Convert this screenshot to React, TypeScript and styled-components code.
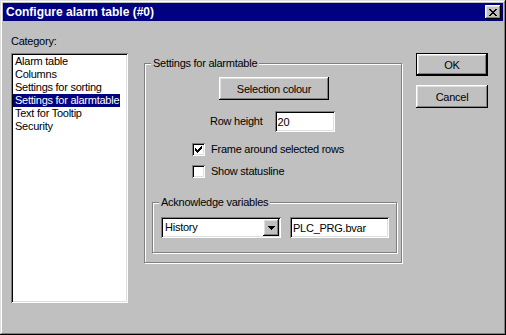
import styled, { createGlobalStyle, css } from 'styled-components';

const GlobalStyle = createGlobalStyle`
 html, body {
  margin: 0;
  padding: 0;
  background: #c0c0c0;
 }
 body {
  font-family: "Liberation Sans", Arial, sans-serif;
  font-size: 11px;
  letter-spacing: -0.25px;
  color: #000;
 }
`;

const raised = css`
 background: #c0c0c0;
 box-shadow: inset -1px -1px #000, inset 1px 1px #fff, inset -2px -2px #808080, inset 2px 2px #dfdfdf;
`;

const sunken = css`
 background: #fff;
 box-shadow: inset 1px 1px #808080, inset -1px -1px #fff, inset 2px 2px #000, inset -2px -2px #dfdfdf;
`;

const Window = styled.div`
 width: 506px;
 height: 335px;
 box-sizing: border-box;
 padding: 3px;
 display: flex;
 flex-direction: column;
 background: #c0c0c0;
 box-shadow: inset -1px -1px #000, inset 1px 1px #dfdfdf, inset -2px -2px #808080, inset 2px 2px #fff;
`;

const TitleBar = styled.div`
 height: 18px;
 display: flex;
 align-items: center;
 justify-content: space-between;
 padding: 0 2px 0 3px;
 background: #000080;
 color: #fff;
 font-weight: bold;
 font-size: 12px;
 letter-spacing: 0;
 line-height: 18px;
`;

const CloseButton = styled.div`
 width: 16px;
 height: 14px;
 display: flex;
 align-items: center;
 justify-content: center;
 ${raised};
`;

const Body = styled.div`
 display: flex;
 align-items: flex-start;
 padding: 14px 0 0 8px;
`;

const LeftColumn = styled.div`
 width: 117px;
 display: flex;
 flex-direction: column;
`;

const Label = styled.div`
 height: 13px;
 line-height: 13px;
 margin-bottom: 5px;
`;

const ListBox = styled.div`
 ${sunken};
 height: 250px;
 box-sizing: border-box;
 padding: 2px;
 display: flex;
 flex-direction: column;
 align-items: flex-start;
`;

const ListItem = styled.div<{ $selected?: boolean }>`
 height: 13px;
 line-height: 13px;
 padding: 0 1px 0 2px;
 white-space: nowrap;
 background: ${(p) => (p.$selected ? '#000080' : 'transparent')};
 color: ${(p) => (p.$selected ? '#fff' : '#000')};
`;

const GroupBox = styled.div<{ $width: number; $ml: number; $mt: number; $pb: number }>`
 width: ${(p) => p.$width}px;
 box-sizing: border-box;
 margin: ${(p) => p.$mt}px 0 0 ${(p) => p.$ml}px;
 padding-bottom: ${(p) => p.$pb}px;
 border: 1px solid #808080;
 box-shadow: inset 1px 1px #fff, 1px 1px #fff;
 display: flex;
 flex-direction: column;
 align-items: flex-start;
`;

const Caption = styled.div`
 height: 13px;
 line-height: 13px;
 margin: -7px 0 0 6px;
 padding: 0 2px;
 background: #c0c0c0;
 white-space: nowrap;
`;

const PushButton = styled.button<{ $width: number; $default?: boolean; $mt?: number; $ml?: number }>`
 width: ${(p) => p.$width}px;
 height: 23px;
 box-sizing: border-box;
 margin: ${(p) => p.$mt ?? 0}px 0 0 ${(p) => p.$ml ?? 0}px;
 padding: 0;
 border: ${(p) => (p.$default ? '1px solid #000' : 'none')};
 font: inherit;
 letter-spacing: inherit;
 color: #000;
 ${raised};
`;

const Row = styled.div<{ $ml: number; $mt: number; $gap: number }>`
 display: flex;
 align-items: center;
 margin: ${(p) => p.$mt}px 0 0 ${(p) => p.$ml}px;
 gap: ${(p) => p.$gap}px;
 line-height: 13px;
 white-space: nowrap;
`;

const Edit = styled.input<{ $width: number; $height: number }>`
 width: ${(p) => p.$width}px;
 height: ${(p) => p.$height}px;
 box-sizing: border-box;
 border: none;
 outline: none;
 padding: 0 0 0 3px;
 font: inherit;
 letter-spacing: inherit;
 color: #000;
 ${sunken};
`;

const CheckBox = styled.span`
 width: 13px;
 height: 13px;
 display: flex;
 align-items: center;
 justify-content: center;
 ${sunken};
`;

const Combo = styled.div`
 width: 120px;
 height: 21px;
 box-sizing: border-box;
 padding: 2px;
 display: flex;
 ${sunken};
`;

const ComboText = styled.div`
 flex: 1;
 line-height: 17px;
 padding-left: 2px;
`;

const DropButton = styled.div`
 width: 16px;
 height: 17px;
 display: flex;
 align-items: center;
 justify-content: center;
 ${raised};
`;

const ButtonColumn = styled.div`
 display: flex;
 flex-direction: column;
 margin: 18px 0 0 14px;
 gap: 9px;
`;

const CloseIcon = () => (
 <svg width='8' height='7' viewBox='0 0 8 7' shapeRendering='crispEdges'>
  <path d='M0 0h2v1H0zM6 0h2v1H6zM1 1h2v1H1zM5 1h2v1H5zM2 2h4v1H2zM3 3h2v1H3zM2 4h4v1H2zM1 5h2v1H1zM5 5h2v1H5zM0 6h2v1H0zM6 6h2v1H6z' fill='#000' />
 </svg>
);

const CheckIcon = () => (
 <svg width='7' height='7' viewBox='0 0 7 7' shapeRendering='crispEdges'>
  <path d='M6 0h1v1H6zM5 1h2v1H5zM0 2h1v1H0zM4 2h3v1H4zM0 3h2v1H0zM3 3h3v1H3zM0 4h5v1H0zM1 5h3v1H1zM2 6h1v1H2z' fill='#000' />
 </svg>
);

const ArrowIcon = () => (
 <svg width='7' height='4' viewBox='0 0 7 4' shapeRendering='crispEdges'>
  <path d='M0 0h7v1H0zM1 1h5v1H1zM2 2h3v1H2zM3 3h1v1H3z' fill='#000' />
 </svg>
);

const categories = ['Alarm table', 'Columns', 'Settings for sorting', 'Settings for alarmtable', 'Text for Tooltip', 'Security'];

export default function App() {
 return (
  <>
   <GlobalStyle />
   <Window>
    <TitleBar>
     <span>Configure alarm table (#0)</span>
     <CloseButton>
      <CloseIcon />
     </CloseButton>
    </TitleBar>
    <Body>
     <LeftColumn>
      <Label>Category:</Label>
      <ListBox>
       {categories.map((c) => (
        <ListItem key={c} $selected={c === 'Settings for alarmtable'}>
         {c}
        </ListItem>
       ))}
      </ListBox>
     </LeftColumn>

     <GroupBox $width={258} $ml={16} $mt={28} $pb={9}>
      <Caption>Settings for alarmtable</Caption>
      <PushButton $width={110} $mt={7} $ml={74}>
       Selection colour
      </PushButton>
      <Row $ml={65} $mt={11} $gap={12}>
       <span>Row height</span>
       <Edit $width={60} $height={21} readOnly defaultValue='20' />
      </Row>
      <Row $ml={47} $mt={11} $gap={6}>
       <CheckBox>
        <CheckIcon />
       </CheckBox>
       <span>Frame around selected rows</span>
      </Row>
      <Row $ml={47} $mt={9} $gap={6}>
       <CheckBox />
       <span>Show statusline</span>
      </Row>
      <GroupBox $width={245} $ml={7} $mt={24} $pb={14}>
       <Caption>Acknowledge variables</Caption>
       <Row $ml={8} $mt={8} $gap={9}>
        <Combo>
         <ComboText>History</ComboText>
         <DropButton>
          <ArrowIcon />
         </DropButton>
        </Combo>
        <Edit $width={99} $height={21} readOnly defaultValue='PLC_PRG.bvar' />
       </Row>
      </GroupBox>
     </GroupBox>

     <ButtonColumn>
      <PushButton $width={72} $default>
       OK
      </PushButton>
      <PushButton $width={72}>Cancel</PushButton>
     </ButtonColumn>
    </Body>
   </Window>
  </>
 );
}
